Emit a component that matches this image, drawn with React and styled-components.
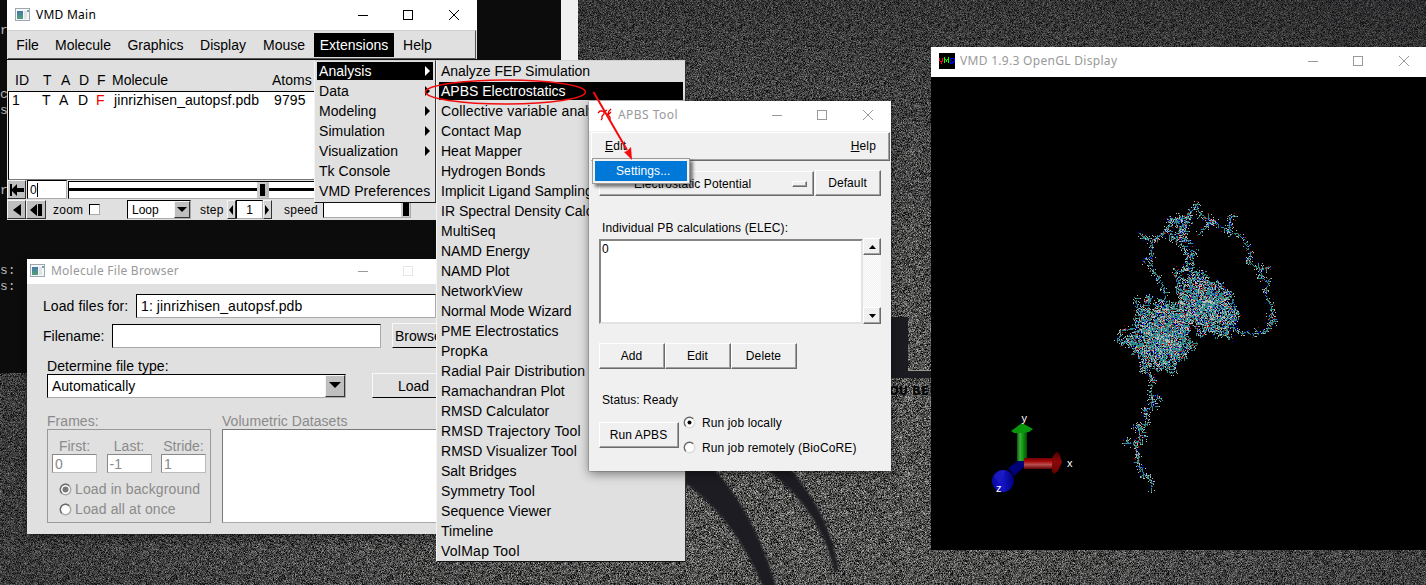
import React from "react";
import styled, { createGlobalStyle, css } from "styled-components";

const Global = createGlobalStyle`
  * { box-sizing: border-box; }
  html, body { margin: 0; padding: 0; overflow: hidden; }
  body { background: #3c3c3b; font-family: "Liberation Sans", Arial, sans-serif; color: #000; }
`;

const Desktop = styled.main`
  position: relative;
  width: 1426px;
  height: 585px;
  overflow: hidden;
`;

const Layer = styled.svg`
  position: absolute;
  left: 0;
  top: 0;
  display: block;
  pointer-events: none;
`;

const Window = styled.section`
  position: absolute;
  left: ${(p) => p.$x}px;
  top: ${(p) => p.$y}px;
  width: ${(p) => p.$w}px;
  height: ${(p) => p.$h}px;
  background: ${(p) => p.$bg || "#e0e0e0"};
  box-shadow: ${(p) => (p.$shadow ? "0 3px 10px rgba(0,0,0,.45), 0 0 1px #222" : "none")};
  display: flex;
  flex-direction: column;
  overflow: ${(p) => (p.$open ? "visible" : "hidden")};
`;

const TitleBar = styled.header`
  flex: none;
  display: flex;
  align-items: center;
  height: ${(p) => p.$h || 30}px;
  padding: 0 ${(p) => p.$right || 16}px ${(p) => p.$pb ?? 1}px ${(p) => p.$left || 8}px;
  background: #fff;
  color: ${(p) => (p.$active ? "#000" : "#999")};
  font: 12px/18px "Noto Sans", "Open Sans", sans-serif;
  letter-spacing: ${(p) => p.$ls || 0}px;
  white-space: nowrap;
`;

const TitleText = styled.span`
  flex: 1;
  margin-left: ${(p) => p.$gap || 5}px;
`;

const Controls = styled.svg`
  flex: none;
  display: block;
`;

function WindowControls({ color = "#999", faded, last = true }) {
  return (
    <Controls width={last ? 104 : 70} height="12" fill="none" stroke={color} shapeRendering="crispEdges">
      <path d="M1 6.5h10" />
      <rect x="46.5" y="1.5" width="9" height="9" stroke={faded ? "#e6e6e6" : color} />
      {last && <path d="M92 1l10 10M102 1l-10 10" shapeRendering="auto" />}
    </Controls>
  );
}

function AppIcon() {
  return (
    <svg width="16" height="14" shapeRendering="crispEdges">
      <defs>
        <linearGradient id="thumb" x1="0" y1="0" x2="0" y2="1">
          <stop offset="0" stopColor="#4977a8" />
          <stop offset="1" stopColor="#4fa077" />
        </linearGradient>
      </defs>
      <rect x=".5" y=".5" width="14" height="12" fill="#f4f6f8" stroke="#9ba7b2" />
      <rect x="2" y="3" width="6" height="8" fill="url(#thumb)" />
      <rect x="9" y="3" width="3" height="8" fill="#dfe5e3" />
      <rect x="12" y="2" width="2" height="2" fill="#7d9db0" />
    </svg>
  );
}

/* ---------- VMD Main ---------- */

const MenuBar = styled.nav`
  flex: none;
  display: flex;
  align-items: center;
  height: 29px;
  margin: 0 1px;
  border-top: 1px solid #d0d0d0;
  border-bottom: 1px solid #555;
  border-right: 1px solid #555;
  font-size: 14px;
`;

const MenuName = styled.span`
  display: flex;
  align-items: center;
  justify-content: center;
  width: ${(p) => p.$w}px;
  height: 24px;
  color: ${(p) => (p.$on ? "#fff" : "#000")};
  background: ${(p) => (p.$on ? "#000" : "transparent")};
`;

const TableHead = styled.div`
  flex: none;
  display: flex;
  align-items: flex-end;
  height: 32px;
  padding: 0 0 2px 8px;
  font-size: 14px;
  line-height: 17px;
  white-space: nowrap;
  border-top: 1px solid #111;
`;

const TableBody = styled.div`
  flex: none;
  height: 89px;
  margin-left: 1px;
  background: #fff;
  border: 1px solid #777;
  border-top: 1px solid #000;
  border-left: 1px solid #000;
`;

const TableRow = styled.div`
  display: flex;
  padding-left: 3px;
  font-size: 14px;
  line-height: 17px;
`;

const Col = styled.span`
  flex: none;
  width: ${(p) => p.$w}px;
  letter-spacing: ${(p) => p.$ls || 0}px;
  color: ${(p) => (p.$red ? "#f00000" : "inherit")};
`;

const Strip = styled.div`
  flex: none;
  display: flex;
  align-items: center;
  height: ${(p) => p.$h || 20}px;
  padding-left: ${(p) => p.$pl || 0}px;
  font-size: 12px;
  white-space: nowrap;
`;

const raised = css`
  border: 1px solid #f4f4f4;
  border-right-color: #333;
  border-bottom-color: #333;
`;
const sunken = css`
  border: 1px solid #000;
  border-right-color: #aaa;
  border-bottom-color: #aaa;
`;

const GlyphButton = styled.span`
  ${raised}
  flex: none;
  display: flex;
  align-items: center;
  justify-content: center;
  width: ${(p) => p.$w || 19}px;
  height: ${(p) => p.$h || 19}px;
  background: ${(p) => p.$bg || "#bfbfbf"};
`;

const Inset = styled.span`
  ${sunken}
  flex: none;
  display: flex;
  align-items: center;
  justify-content: ${(p) => p.$align || "flex-start"};
  width: ${(p) => p.$w}px;
  height: ${(p) => p.$h || 19}px;
  margin-left: ${(p) => p.$ml || 0}px;
  padding-left: ${(p) => p.$pl || 0}px;
  background: #fff;
  font-size: ${(p) => p.$fs || 12}px;
  letter-spacing: ${(p) => p.$ls || 0}px;
`;

const Caption = styled.span`
  flex: none;
  width: ${(p) => p.$w}px;
  margin-left: ${(p) => p.$ml || 0}px;
  letter-spacing: 0.25px;
`;

const Caret = styled.i`
  width: 1px;
  height: 14px;
  background: #000;
`;

const SliderRail = styled.span`
  ${sunken}
  flex: 1;
  display: flex;
  align-items: center;
  height: 18px;
  margin-left: 1px;
  background: #fff;
  &::before { content: ""; width: 188px; height: 3px; background: #000; }
  &::after { content: ""; flex: 1; height: 3px; background: #000; }
`;

const SliderThumb = styled.span`
  ${raised}
  width: 12px;
  height: 16px;
  background: #000;
  border-width: 2px 4px 2px 3px;
  border-color: #ccc #bbb #ccc #ccc;
`;

const SpeedThumb = styled.span`
  width: 9px;
  height: 15px;
  background: #000;
  border: 1px solid #ccc;
  border-width: 1px 1px 1px 2px;
`;

const Glyph = ({ d, w = 14, h = 14 }) => (
  <svg width={w} height={h}>
    <path d={d} fill="#000" />
  </svg>
);

function VmdMain() {
  return (
    <Window $x={7} $y={0} $w={470} $h={220} $bg="#e0e0e0">
      <TitleBar $active $left={8} $right={16} $ls={0.25}>
        <AppIcon />
        <TitleText>VMD Main</TitleText>
        <WindowControls color="#000" />
      </TitleBar>
      <MenuBar>
        <MenuName $w={39}>File</MenuName>
        <MenuName $w={72}>Molecule</MenuName>
        <MenuName $w={73}>Graphics</MenuName>
        <MenuName $w={62}>Display</MenuName>
        <MenuName $w={60}>Mouse</MenuName>
        <MenuName $w={80} $on>Extensions</MenuName>
        <MenuName $w={47}>Help</MenuName>
      </MenuBar>
      <TableHead>
        <Col $w={28}>ID</Col>
        <Col $w={18}>T</Col>
        <Col $w={18}>A</Col>
        <Col $w={18}>D</Col>
        <Col $w={15}>F</Col>
        <Col $w={160}>Molecule</Col>
        <Col $w={45}>Atoms</Col>
      </TableHead>
      <TableBody>
        <TableRow>
          <Col $w={30}>1</Col>
          <Col $w={17}>T</Col>
          <Col $w={19}>A</Col>
          <Col $w={18}>D</Col>
          <Col $w={18} $red>F</Col>
          <Col $w={160} $ls={0.08}>jinrizhisen_autopsf.pdb</Col>
          <Col $w={40} $ls={0.1}>9795</Col>
        </TableRow>
      </TableBody>
      <Strip $h={19}>
        <GlyphButton>
          <Glyph d="M0 1h2v12H0zM1 7l6-6v4h7v4H7v4z" />
        </GlyphButton>
        <Inset $w={40} $ml={1} $pl={2}>
          0<Caret />
        </Inset>
        <SliderRail>
          <SliderThumb />
        </SliderRail>
      </Strip>
      <Strip $h={21}>
        <GlyphButton>
          <Glyph w={10} h={12} d="M9 0v12L1 6z" />
        </GlyphButton>
        <GlyphButton $w={20}>
          <Glyph d="M8 1v12L1 7zM9 1h4v12H9z" />
        </GlyphButton>
        <Caption $w={35} $ml={7}>zoom</Caption>
        <Inset $w={11} $h={11} $ml={1} />
        <Inset $w={64} $ml={27} $pl={4} $align="space-between">
          Loop
          <GlyphButton $w={16} $h={17}>
            <Glyph w={10} h={6} d="M0 0h10L5 5z" />
          </GlyphButton>
        </Inset>
        <Caption $w={27} $ml={9}>step</Caption>
        <GlyphButton $w={9} $bg="#d4d4d4">
          <Glyph w={5} h={10} d="M4 0v10L0 5z" />
        </GlyphButton>
        <Inset $w={27} $align="center">1</Inset>
        <GlyphButton $w={9} $bg="#d4d4d4">
          <Glyph w={5} h={10} d="M0 0v10l4-5z" />
        </GlyphButton>
        <Caption $w={38} $ml={12}>speed</Caption>
        <Inset $w={88} $h={17} $ml={1} $align="flex-end">
          <SpeedThumb />
        </Inset>
      </Strip>
    </Window>
  );
}

/* ---------- Cascading menus ---------- */

const Popup = styled.ul`
  position: absolute;
  left: ${(p) => p.$x}px;
  top: 60px;
  width: ${(p) => p.$w}px;
  height: ${(p) => p.$h}px;
  margin: 0;
  padding: 1px 2px 0 2px;
  list-style: none;
  background: #e0e0e0;
  border-left: 1px solid #f4f4f4;
  border-right: 1px solid #333;
  border-bottom: 1px solid #111;
  border-top: 1px solid #d0d0d0;
`;

const PopupItem = styled.li`
  display: flex;
  align-items: center;
  justify-content: space-between;
  height: 18px;
  margin-bottom: 2px;
  padding: 0 2px 0 2px;
  font-size: 14px;
  letter-spacing: ${(p) => p.$ls || 0}px;
  white-space: nowrap;
  color: ${(p) => (p.$on ? "#fff" : "#000")};
  background: ${(p) => (p.$on ? "#000" : "transparent")};
`;

const extensions = [
  ["Analysis", true], ["Data", true], ["Modeling", true], ["Simulation", true],
  ["Visualization", true], ["Tk Console", false], ["VMD Preferences", false],
];

const analysis = [
  ["Analyze FEP Simulation", -0.04], ["APBS Electrostatics"], ["Collective variable analy", 0.15],
  ["Contact Map", 0.08], ["Heat Mapper"], ["Hydrogen Bonds"], ["Implicit Ligand Sampling"],
  ["IR Spectral Density Calc"], ["MultiSeq"], ["NAMD Energy", -0.08], ["NAMD Plot", -0.1], ["NetworkView"],
  ["Normal Mode Wizard", -0.05], ["PME Electrostatics"], ["PropKa"], ["Radial Pair Distribution", 0.07],
  ["Ramachandran Plot"], ["RMSD Calculator"], ["RMSD Trajectory Tool", 0.2], ["RMSD Visualizer Tool", 0.05],
  ["Salt Bridges"], ["Symmetry Tool", 0.12], ["Sequence Viewer", 0.05], ["Timeline"], ["VolMap Tool", 0.25],
];

function Menus() {
  return (
    <>
      <Popup $x={314} $w={122} $h={143}>
        {extensions.map(([name, sub], i) => (
          <PopupItem key={name} $on={i === 0} $ls={0.05}>
            {name}
            {sub && (
              <svg width="6" height="10">
                <path d="M0 0v10l5-5z" fill={i === 0 ? "#fff" : "#000"} />
              </svg>
            )}
          </PopupItem>
        ))}
      </Popup>
      <Popup $x={436} $w={250} $h={502}>
        {analysis.map(([name, ls], i) => (
          <PopupItem key={name} $on={i === 1} $ls={ls}>
            {name}
          </PopupItem>
        ))}
      </Popup>
    </>
  );
}

/* ---------- Molecule File Browser ---------- */

const FormRow = styled.div`
  flex: none;
  display: flex;
  align-items: center;
  height: ${(p) => p.$h || 25}px;
  margin: ${(p) => p.$mt || 0}px 0 0 ${(p) => p.$ml || 0}px;
  font-size: 14px;
  white-space: nowrap;
`;

const FieldName = styled.span`
  flex: none;
  width: ${(p) => p.$w}px;
  letter-spacing: ${(p) => p.$ls || 0}px;
`;

const PlainButton = styled.span`
  flex: none;
  display: flex;
  align-items: center;
  justify-content: ${(p) => p.$align || "center"};
  width: ${(p) => p.$w}px;
  height: 25px;
  margin-left: ${(p) => p.$ml}px;
  padding-left: ${(p) => p.$pl || 0}px;
  border: 1px solid #f8f8f8;
  border-right: 0;
  border-bottom-color: #000;
`;

const Dim = styled.div`
  display: flex;
  margin: 15px 0 0 20px;
  color: #8a8a8a;
  font-size: 14px;
`;

const DimPanel = styled.div`
  flex: none;
  width: ${(p) => p.$w}px;
  margin-right: 11px;
`;

const PanelTitle = styled.div`
  height: 16px;
  line-height: 17px;
  white-space: nowrap;
  letter-spacing: 0.05px;
`;

const FramesBox = styled.div`
  height: 94px;
  padding: 8px 4px 0;
  border: 1px solid #999;
`;

const FrameFields = styled.div`
  display: flex;
  justify-content: space-between;
  margin-bottom: 6px;
`;

const FrameField = styled.div`
  width: 45px;
  line-height: 16px;
  text-align: center;
  white-space: nowrap;
`;

const DimInput = styled.div`
  height: 19px;
  padding-left: 2px;
  text-align: left;
  line-height: 18px;
  background: #fff;
  border: 1px solid #888;
  border-right-color: #bbb;
  border-bottom-color: #bbb;
`;

const RadioRow = styled.div`
  display: flex;
  align-items: center;
  height: ${(p) => p.$h || 20}px;
  padding-left: ${(p) => p.$pl || 0}px;
  letter-spacing: ${(p) => p.$ls || 0}px;
  white-space: nowrap;
`;

const RadioText = styled.span`
  margin-left: ${(p) => p.$ml ?? 6}px;
  letter-spacing: 0.12px;
`;

const DatasetsBox = styled.div`
  height: 94px;
  background: #fff;
  border: 1px solid #777;
  border-bottom-color: #aaa;
`;

function Radio({ on, dim }) {
  return (
    <svg width="13" height="13">
      <circle cx="6.5" cy="6.5" r="5.2" fill="#fff" stroke={dim ? "#aaa" : "#dcdcdc"} strokeWidth="1.5" />
      <path d="M2.8 10.2A5.2 5.2 0 0 1 10.2 2.8" fill="none" stroke="#6a6a6a" strokeWidth="1.3" />
      {on && <circle cx="6.5" cy="6.5" r={dim ? 3 : 2} fill={dim ? "#777" : "#000"} />}
    </svg>
  );
}

function FileBrowser() {
  return (
    <Window $x={27} $y={259} $w={409} $h={275} $bg="#e0e0e0" $shadow>
      <TitleBar $h={25} $left={3} $right={9} $ls={0.24}>
        <AppIcon />
        <TitleText>Molecule File Browser</TitleText>
        <WindowControls faded last={false} />
      </TitleBar>
      <FormRow $mt={9} $ml={16}>
        <FieldName $w={93} $ls={0.08}>Load files for:</FieldName>
        <Inset $w={300} $h={24} $fs={14} $pl={4} $ls={0.1}>1: jinrizhisen_autopsf.pdb</Inset>
      </FormRow>
      <FormRow $mt={5} $ml={16}>
        <FieldName $w={69}>Filename:</FieldName>
        <Inset $w={269} $h={24} />
        <PlainButton $w={55} $ml={11} $pl={2} $align="flex-start">Browse</PlainButton>
      </FormRow>
      <FormRow $h={17} $mt={9} $ml={20}>
        <FieldName $w={130} $ls={0.05}>Determine file type:</FieldName>
      </FormRow>
      <FormRow $h={25} $mt={-1} $ml={20}>
        <Inset $w={299} $h={24} $fs={14} $pl={4} $align="space-between">
          Automatically
          <GlyphButton $w={20} $h={22}>
            <Glyph w={12} h={7} d="M0 0h12L6 6z" />
          </GlyphButton>
        </Inset>
        <PlainButton $w={82} $ml={26}>Load</PlainButton>
      </FormRow>
      <Dim>
        <DimPanel $w={164}>
          <PanelTitle>Frames:</PanelTitle>
          <FramesBox>
            <FrameFields>
              <FrameField>First:<DimInput>0</DimInput></FrameField>
              <FrameField>Last:<DimInput>-1</DimInput></FrameField>
              <FrameField>Stride:<DimInput>1</DimInput></FrameField>
            </FrameFields>
            <RadioRow $pl={7}><Radio on dim /><RadioText $ml={3}>Load in background</RadioText></RadioRow>
            <RadioRow $pl={7}><Radio dim /><RadioText $ml={3}>Load all at once</RadioText></RadioRow>
          </FramesBox>
        </DimPanel>
        <DimPanel $w={260}>
          <PanelTitle>Volumetric Datasets</PanelTitle>
          <DatasetsBox />
        </DimPanel>
      </Dim>
    </Window>
  );
}

/* ---------- APBS Tool ---------- */

const tkRaised = css`
  border: 1px solid #fff;
  border-right: 1px solid #6b6b6b;
  border-bottom: 1px solid #6b6b6b;
  box-shadow: inset -1px -1px #a0a0a0;
`;

const TkMenuBar = styled.nav`
  ${tkRaised}
  flex: none;
  display: flex;
  justify-content: space-between;
  align-items: center;
  height: 29px;
  margin: 1px 1px 0 2px;
  padding: 0 13px 1px 13px;
  font-size: 12px;
  letter-spacing: 0.15px;
`;

const TkBody = styled.div`
  display: flex;
  flex-direction: column;
  padding: 9px 10px 0;
  font-size: 12px;
`;

const TkRow = styled.div`
  display: flex;
  align-items: ${(p) => p.$align || "stretch"};
  gap: ${(p) => p.$gap || 0}px;
  margin-top: ${(p) => p.$mt || 0}px;
`;

const TkButton = styled.span`
  ${tkRaised}
  flex: none;
  display: flex;
  align-items: center;
  justify-content: center;
  width: ${(p) => p.$w}px;
  height: 26px;
  padding-right: 1px;
  letter-spacing: 0.1px;
`;

const TkOption = styled(TkButton)`
  justify-content: space-between;
  padding: 0 6px 0 34px;
  height: 25px;
  margin-top: 1px;
  letter-spacing: 0.08px;
`;

const OptionMark = styled.i`
  ${tkRaised}
  width: 15px;
  height: 6px;
`;

const TkText = styled.div`
  height: 14px;
  line-height: 14px;
  padding-left: 3px;
  margin-top: ${(p) => p.$mt}px;
  letter-spacing: ${(p) => p.$ls || 0}px;
`;

const TkList = styled.div`
  width: 264px;
  height: 85px;
  padding: 1px;
  background: #fff;
  border: 2px solid #6b6b6b;
  border-top-color: #858585;
  border-left-color: #858585;
  border-right-color: #e3e3e3;
  border-bottom-color: #e3e3e3;
`;

const TkScroll = styled.div`
  display: flex;
  flex-direction: column;
  justify-content: space-between;
  width: 18px;
  height: 86px;
  margin-top: -1px;
  background: repeating-conic-gradient(#fff 0 25%, #efefef 0 50%) 0 0 / 2px 2px;
`;

const TkArrow = styled.span`
  ${tkRaised}
  display: flex;
  align-items: center;
  justify-content: center;
  height: 17px;
  background: #f0f0f0;
`;

const TkRadios = styled.div`
  display: flex;
  flex-direction: column;
  margin: -12px 0 0 4px;
`;

const Dropdown = styled.div`
  position: absolute;
  left: 3px;
  top: 57px;
  width: 98px;
  height: 26px;
  padding: 2px;
  background: #f2f2f2;
  border: 1px solid #999;
  box-shadow: 3px 3px 3px rgba(0, 0, 0, 0.5);
`;

const DropdownItem = styled.div`
  height: 20px;
  padding-left: 21px;
  line-height: 20px;
  font-size: 12px;
  letter-spacing: 0.1px;
  color: #fff;
  background: #0078d7;
`;

function ApbsTool() {
  return (
    <Window $x={589} $y={101} $w={302} $h={370} $bg="#f0f0f0" $shadow $open>
      <TitleBar $left={8} $right={16} $ls={0.45} $pb={2}>
        <svg width="16" height="16" fill="none" stroke="#e00000" strokeWidth="1.3">
          <path d="M1 6l2-2h2l2 1 3-2M7 5v2L5 9v3M5 12l-1 1M14 2l-2 2-2 5M10 7l3 3v3M11 8l3-3" />
        </svg>
        <TitleText>APBS Tool</TitleText>
        <WindowControls />
      </TitleBar>
      <TkMenuBar>
        <span><u>E</u>dit</span>
        <span><u>H</u>elp</span>
      </TkMenuBar>
      <TkBody>
        <TkRow $gap={1}>
          <TkOption $w={215}>Electrostatic Potential<OptionMark /></TkOption>
          <TkButton $w={66}>Default</TkButton>
        </TkRow>
        <TkText $mt={25} $ls={0.12}>Individual PB calculations (ELEC):</TkText>
        <TkRow $mt={4}>
          <TkList>0</TkList>
          <TkScroll>
            <TkArrow><Glyph w={7} h={4} d="M0 4h7L3.500 0z" /></TkArrow>
            <TkArrow><Glyph w={7} h={4} d="M0 0h7L3.500 4z" /></TkArrow>
          </TkScroll>
        </TkRow>
        <TkRow $mt={19}>
          <TkButton $w={66}>Add</TkButton>
          <TkButton $w={66}>Edit</TkButton>
          <TkButton $w={66}>Delete</TkButton>
        </TkRow>
        <TkText $mt={24} $ls={0.05}>Status: Ready</TkText>
        <TkRow $mt={15} $align="flex-start">
          <TkButton $w={80}>Run APBS</TkButton>
          <TkRadios>
            <RadioRow $h={25}><Radio on /><RadioText>Run job locally</RadioText></RadioRow>
            <RadioRow $h={25}><Radio /><RadioText>Run job remotely (BioCoRE)</RadioText></RadioRow>
          </TkRadios>
        </TkRow>
      </TkBody>
      <Dropdown>
        <DropdownItem>Settings...</DropdownItem>
      </Dropdown>
    </Window>
  );
}

/* ---------- OpenGL display ---------- */

function random(seed) {
  let s = seed;
  return () => {
    s = (s + 0x6d2b79f5) | 0;
    let t = Math.imul(s ^ (s >>> 15), 1 | s);
    t = (t + Math.imul(t ^ (t >>> 7), 61 | t)) ^ t;
    return ((t ^ (t >>> 14)) >>> 0) / 4294967296;
  };
}

const palette = { C: "#2d8b8b", D: "#236b6b", H: "#b8b8b8", N: "#0000cc", O: "#c40000", S: "#a8a800" };

const chains = [
  [[215, 185], [250, 155], [290, 120], [325, 105], [345, 75], [365, 105], [400, 125], [440, 150], [480, 165], [500, 190], [510, 225], [500, 245], [540, 265], [545, 290], [565, 310], [550, 335], [570, 370], [575, 400], [575, 425], [555, 455], [520, 460], [480, 455], [450, 440]],
  [[447, 150], [448, 115], [462, 102]],
  [[365, 155], [385, 130], [410, 125]],
  [[545, 265], [572, 260]],
  [[182, 166], [215, 185], [212, 230], [215, 265], [235, 290], [250, 320], [255, 370]],
  [[188, 238], [212, 230]],
  [[195, 560], [215, 600], [212, 640], [222, 675], [195, 690], [200, 732], [178, 745], [190, 770], [160, 790], [175, 820], [172, 850], [190, 880], [215, 905], [215, 928]],
  [[222, 645], [245, 662]],
  [[155, 735], [178, 745]],
  [[137, 787], [165, 790]],
  [[165, 350], [175, 395], [205, 350], [205, 390]],
  [[160, 445], [120, 450], [115, 485], [160, 490]],
  [[225, 175], [260, 150], [270, 115], [320, 120], [300, 180], [260, 160]],
  [[270, 110], [300, 145], [318, 180], [300, 185], [322, 215], [318, 250], [335, 290]],
  [[325, 95], [305, 140], [300, 170], [335, 190]],
  [[280, 280], [340, 260], [330, 210], [355, 210]],
  [[440, 330], [455, 350], [465, 390], [455, 420], [425, 470]],
];

const blobs = [
  { x: 242, y: 470, rx: 98, ry: 108, tilt: 0.1, n: 4700 },
  { x: 376, y: 372, rx: 118, ry: 78, tilt: 0.85, n: 3500 },
  { x: 300, y: 405, rx: 50, ry: 45, tilt: 0, n: 350 },
  { x: 300, y: 145, rx: 38, ry: 48, tilt: 0, n: 120 },
];

function buildMolecule() {
  const rnd = random(77);
  const grid = new Map();
  const put = (x, y, k) => grid.set(Math.round(x) + " " + Math.round(y), k);
  const tip = () => {
    const r = rnd();
    return r < 0.7 ? "H" : r < 0.85 ? "O" : "N";
  };
  chains.forEach((pts) => {
    for (let i = 1; i < pts.length; i++) {
      const [ax, ay] = pts[i - 1];
      const [bx, by] = pts[i];
      const n = Math.max(2, Math.hypot(bx - ax, by - ay) / 3);
      for (let t = 0; t < n; t++) {
        const x = (ax + ((bx - ax) * t) / n) / 3 + (rnd() - 0.5) * 1.8;
        const y = (ay + ((by - ay) * t) / n) / 3 + (rnd() - 0.5) * 1.8;
        put(x, y, rnd() < 0.14 ? "N" : "C");
        if (rnd() < 0.4) {
          const a = Math.floor(rnd() * 8) * (Math.PI / 4);
          const len = 1 + Math.floor(rnd() * 4);
          for (let s = 1; s <= len; s++) put(x + Math.cos(a) * s, y + Math.sin(a) * s, "C");
          put(x + Math.cos(a) * (len + 1), y + Math.sin(a) * (len + 1), tip());
          put(x + Math.cos(a + 0.8) * (len + 1), y + Math.sin(a + 0.8) * (len + 1), tip());
          put(x + Math.cos(a - 1) * len, y + Math.sin(a - 1) * len, tip());
        }
      }
    }
  });
  blobs.forEach((b) => {
    for (let i = 0; i < b.n; i++) {
      const a = rnd() * Math.PI * 2;
      const edge = 0.92 + 0.1 * Math.sin(a * 7) + 0.08 * Math.sin(a * 13) + (rnd() - 0.5) * 0.22;
      const r = Math.pow(rnd(), 0.66) * edge;
      const u = Math.cos(a) * r * b.rx;
      const v = Math.sin(a) * r * b.ry;
      const x = (b.x + u * Math.cos(b.tilt) - v * Math.sin(b.tilt)) / 3;
      const y = (b.y + u * Math.sin(b.tilt) + v * Math.cos(b.tilt)) / 3;
      const q = rnd();
      const k = q < 0.36 ? "C" : q < 0.43 ? "D" : q < 0.81 ? "H" : q < 0.91 ? "N" : q < 0.995 ? "O" : "S";
      put(x, y, k);
      if (k === "C") {
        const across = rnd() < 0.5;
        put(x + (across ? 1 : 0), y + (across ? 0 : 1), "C");
      }
    }
  });
  const paths = {};
  grid.forEach((k, key) => {
    paths[k] = (paths[k] || "") + "M" + key + "h1v1h-1z";
  });
  return paths;
}

const molecule = buildMolecule();

const Scene = styled.svg`
  flex: 1;
  display: block;
  background: #000;
`;

function OpenGLDisplay() {
  return (
    <Window $x={931} $y={47} $w={495} $h={503} $bg="#000">
      <TitleBar $left={8} $right={15} $ls={0.3} $pb={2}>
        <svg width="16" height="16" shapeRendering="crispEdges" fill="none">
          <rect width="16" height="16" fill="#000" />
          <path d="M.5 5v2l2 3 1-3V5" stroke="#f00" />
          <path d="M5.500 10V5l2 3 2-3v5" stroke="#0f0" />
          <path d="M11.500 5v5h2l2-2V6l-2-1z" stroke="#00f" />
        </svg>
        <TitleText>VMD 1.9.3 OpenGL Display</TitleText>
        <WindowControls />
      </TitleBar>
      <Scene viewBox="931 77 495 473">
        <defs>
          <linearGradient id="gy"><stop offset="0" stopColor="#085808" /><stop offset=".3" stopColor="#3cae3c" /><stop offset=".6" stopColor="#0c960c" /><stop offset="1" stopColor="#064a06" /></linearGradient>
          <linearGradient id="gx" x2="0" y2="1"><stop offset="0" stopColor="#700000" /><stop offset=".3" stopColor="#a80808" /><stop offset=".6" stopColor="#b85050" /><stop offset="1" stopColor="#600000" /></linearGradient>
          <linearGradient id="gc" x2="0" y2="1"><stop offset="0" stopColor="#500000" /><stop offset=".45" stopColor="#8e0808" /><stop offset="1" stopColor="#640000" /></linearGradient>
          <linearGradient id="gz"><stop offset="0" stopColor="#0808a0" /><stop offset=".5" stopColor="#1414c8" /><stop offset="1" stopColor="#000078" /></linearGradient>
        </defs>
        <g transform="translate(1080 180)" shapeRendering="crispEdges">
          {Object.entries(molecule).map(([k, d]) => (
            <path key={k} d={d} fill={palette[k]} />
          ))}
        </g>
        <path d="M1017 431h10v30h-10z" fill="url(#gy)" />
        <path d="M1022 423l11 6-4 3-6 1h-9l-3-2z" fill="#08960c" />
        <path d="M1024 458h28v11h-28z" fill="url(#gx)" />
        <path d="M1052 458l4-6 3 1 3 9-4 9-4 3-2-3z" fill="url(#gc)" />
        <path d="M1018 461h6v6l-10 9-6-8z" fill="#000078" />
        <circle cx="1003" cy="481" r="11" fill="url(#gz)" />
        <path d="M1000 484l-7-8 6-5 7-1z" fill="#2424c8" opacity=".5" />
        <g fill="#fff" fontFamily="Liberation Sans, sans-serif" fontSize="11">
          <text x="1021.500" y="422">y</text>
          <text x="1067" y="467">x</text>
          <text x="996" y="492">z</text>
        </g>
      </Scene>
    </Window>
  );
}

/* ---------- Wallpaper, console and annotation ---------- */

function Wallpaper() {
  return (
    <Layer width="1426" height="585">
      <defs>
        <filter id="grain" x="0" y="0" width="1" height="1" colorInterpolationFilters="sRGB">
          <feTurbulence type="fractalNoise" baseFrequency="2.37 3.41" numOctaves="2" seed="4" />
          <feColorMatrix values="1.45 0 0 0 -0.39  1.45 0 0 0 -0.39  1.45 0 0 0 -0.395  0 0 0 0 1" />
        </filter>
        <filter id="soft"><feGaussianBlur stdDeviation="1" /></filter>
        <linearGradient id="shade" x2="0" y2="1">
          <stop offset="0" stopColor="#17171a" stopOpacity=".38" />
          <stop offset=".22" stopColor="#17171a" stopOpacity=".15" />
          <stop offset=".6" stopColor="#17171a" stopOpacity="0" />
        </linearGradient>
        <radialGradient id="side" gradientUnits="userSpaceOnUse" cx="760" cy="400" r="800">
          <stop offset=".1" stopColor="#17171a" stopOpacity="0" />
          <stop offset="1" stopColor="#17171a" stopOpacity=".45" />
        </radialGradient>
      </defs>
      <rect width="1426" height="585" filter="url(#grain)" />
      <rect width="1426" height="585" fill="url(#shade)" />
      <rect width="1426" height="585" fill="url(#side)" />
      <g fill="#1c1b22">
        <g filter="url(#soft)">
          <path d="M680 462H707C738 492 762 536 777 590H764C746 543 715 502 680 480z" />
          <path d="M755 462H783C812 490 831 527 838 567L835 575C828 535 803 492 755 462z" />
        </g>
        <path d="M886 317h22v54h24v7h-46z" />
      </g>
      <path d="M908 370.500h24" stroke="#99998f" />
      <text x="889" y="395" fill="#080808" fontFamily="DejaVu Sans, sans-serif" fontWeight="700" fontSize="11.500">OU BE</text>
    </Layer>
  );
}

const Console = styled.pre`
  position: absolute;
  left: 0;
  top: 0;
  width: 578px;
  height: 373px;
  margin: 0;
  padding: 7px 0 0 0;
  background: #0c0c0c;
  border-right: 17px solid #f0f0f0;
  color: #b8b8b8;
  font: 13px/16px "Liberation Mono", monospace;
`;

const ConsoleLine = styled.div`
  width: ${(p) => p.$w}px;
  height: 16px;
`;

const consoleLines = ["", "r", "", "", "", "c", "s", "", "", "", "", "r", "", "", "", "", "s:", "s:"];

function Annotation() {
  return (
    <Layer width="1426" height="585" fill="none" stroke="#f40c0c">
      <ellipse cx="505.500" cy="92" rx="80" ry="12" strokeWidth="1.500" />
      <path d="M593.500 92L627 150" strokeWidth="2" />
      <path d="M632 160l-8-8 3-1 4-4z" fill="#f40c0c" stroke="none" />
    </Layer>
  );
}

export default function App() {
  return (
    <Desktop>
      <Global />
      <Wallpaper />
      <Console>
        {consoleLines.map((line, i) => (
          <ConsoleLine key={i} $w={i > 13 ? 26 : 8}>{line}</ConsoleLine>
        ))}
      </Console>
      <VmdMain />
      <FileBrowser />
      <Menus />
      <ApbsTool />
      <OpenGLDisplay />
      <Annotation />
    </Desktop>
  );
}
